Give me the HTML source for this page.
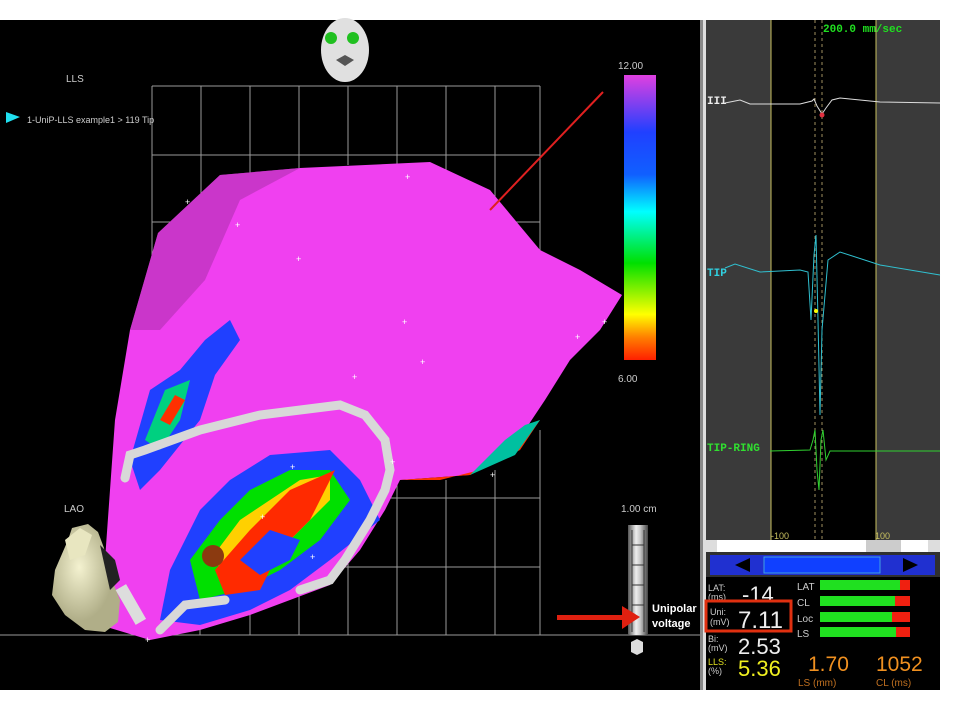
<!DOCTYPE html>
<html><head><meta charset="utf-8"><style>
body{margin:0;width:960px;height:720px;background:#fff;overflow:hidden;font-family:"Liberation Sans",sans-serif}
svg{position:absolute;left:0;top:0}
</style></head><body>
<svg width="960" height="720" viewBox="0 0 960 720">
<defs>
<linearGradient id="cb" x1="0" y1="0" x2="0" y2="1">
<stop offset="0" stop-color="#e040e0"/><stop offset="0.2" stop-color="#2040ff"/><stop offset="0.35" stop-color="#1060ff"/>
<stop offset="0.48" stop-color="#00ffff"/><stop offset="0.66" stop-color="#00e000"/><stop offset="0.84" stop-color="#ffff00"/>
<stop offset="0.92" stop-color="#ff8000"/><stop offset="1" stop-color="#ff2000"/></linearGradient>
<linearGradient id="sb" x1="0" y1="0" x2="1" y2="0"><stop offset="0" stop-color="#555"/><stop offset=".4" stop-color="#eee"/><stop offset=".6" stop-color="#ccc"/><stop offset="1" stop-color="#444"/></linearGradient>
<radialGradient id="ht" cx=".4" cy=".4"><stop offset="0" stop-color="#f4f2d0"/><stop offset="1" stop-color="#b0ae88"/></radialGradient>
</defs>
<rect x="0" y="20" width="700" height="670" fill="#000"/>
<g stroke="#9a9a9a" stroke-width="1" fill="none">
<path d="M152 86H540M152 155H540M152 222H540M152 86V300M201 86V200M250 86V190M299 86V170M348 86V165M397 86V165M446 86V170M495 86V200M540 86V260"/>
<path d="M0 635H700M200 600V635M250 590V635M299 560V635M348 520V635M397 480V635M446 480V635M495 470V635M540 430V635M380 498H540M340 567H540"/>
</g>
<path d="M158 233L220 175L300 168L430 162L490 190L540 250L580 270L622 295L600 330L570 360L545 400L525 430L505 455L470 475L400 480L385 510L360 550L330 585L290 600L250 615L200 630L150 640L100 625L105 560L115 420L130 330Z" fill="#f040f0"/>
<path d="M158 233L220 175L300 168L240 200L205 280L160 330L130 330Z" fill="#b030b0" opacity=".6"/>
<path d="M130 460L150 390L180 370L205 340L230 320L240 340L215 375L200 420L160 470L140 490Z" fill="#2040ff"/>
<path d="M145 440L165 390L190 380L180 420L160 450Z" fill="#00d080"/>
<path d="M160 420L175 395L185 400L170 425Z" fill="#ff3000"/>
<path d="M170 570L200 510L230 480L270 455L330 450L360 480L380 520L330 560L290 590L250 610L200 625L160 620Z" fill="#2040ff"/>
<path d="M190 560L220 520L250 490L290 470L330 470L350 500L320 540L280 570L240 590L200 600Z" fill="#00e000"/>
<path d="M210 560L240 520L270 500L300 480L330 475L330 500L300 530L270 560L240 580Z" fill="#ffd000"/>
<path d="M215 570L250 530L290 490L335 470L310 520L280 550L260 590L225 595Z" fill="#ff2a00"/>
<path d="M240 560L270 530L300 540L290 560L260 575Z" fill="#2040ff"/>
<path d="M400 480L470 475L505 455L525 430L540 420L520 450L480 470L440 480Z" fill="#ff3000"/>
<path d="M470 475L505 440L525 425L540 420L515 455Z" fill="#00c0a0"/>
<g stroke="#d8d8d8" stroke-width="9" fill="none" stroke-linecap="round">
<path d="M125 478L130 455L145 450L200 430L260 415L340 405L365 415L385 440L390 470L385 490L370 520L345 560L330 580L300 590"/>
<path d="M160 630L185 605L225 600"/>
</g>
<circle cx="213" cy="556" r="11" fill="#8b3a10"/>
<g fill="#fff" font-size="9">
<text x="185" y="205">+</text><text x="235" y="228">+</text><text x="296" y="262">+</text><text x="402" y="325">+</text><text x="420" y="365">+</text><text x="352" y="380">+</text><text x="290" y="470">+</text><text x="390" y="465">+</text><text x="260" y="520">+</text><text x="310" y="560">+</text><text x="490" y="478">+</text><text x="575" y="340">+</text><text x="602" y="325">+</text><text x="145" y="643">+</text><text x="405" y="180">+</text>
</g>
<line x1="490" y1="210" x2="603" y2="92" stroke="#e02020" stroke-width="2"/>
<rect x="624" y="75" width="32" height="285" fill="url(#cb)"/>
<text x="618" y="69" fill="#ccc" font-size="10">12.00</text>
<text x="618" y="382" fill="#ccc" font-size="10">6.00</text>
<ellipse cx="345" cy="50" rx="24" ry="32" fill="#e0e0e0"/>
<circle cx="331" cy="38" r="6" fill="#20c020"/><circle cx="353" cy="38" r="6" fill="#20c020"/>
<path d="M336 60L345 55L354 60L345 66Z" fill="#555"/>
<text x="66" y="82" fill="#ccc" font-size="10">LLS</text>
<path d="M6 112L20 117L6 123Z" fill="#20e0f0"/>
<text x="27" y="123" fill="#ccc" font-size="9">1-UniP-LLS example1 &gt; 119 Tip</text>
<text x="64" y="512" fill="#ccc" font-size="10">LAO</text>
<path d="M68 540L72 528L88 524L98 532L104 548L110 575L120 600L118 622L105 632L85 630L65 615L52 595L55 570Z" fill="url(#ht)"/>
<path d="M65 540L80 528L92 535L85 555L70 560Z" fill="#e8e6c0"/>
<path d="M100 545L115 560L120 580L110 590Z" fill="#222"/>
<rect x="125" y="585" width="12" height="40" fill="#ddd" transform="rotate(-30 130 605)"/>
<text x="621" y="512" fill="#ccc" font-size="10">1.00 cm</text>
<rect x="628" y="525" width="20" height="110" fill="url(#sb)"/>
<path d="M632 530V632M644 530V632M632 545H644M632 565H644M632 585H644M632 605H644" stroke="#333" stroke-width="1"/>
<path d="M631 642L637 639L643 642V652L637 655L631 652Z" fill="#ddd"/>
<rect x="557" y="615" width="70" height="5" fill="#e02010"/>
<path d="M622 606L640 617L622 629Z" fill="#e02010"/>
<text x="652" y="612" fill="#fff" font-size="11" font-weight="bold">Unipolar</text>
<text x="652" y="627" fill="#fff" font-size="11" font-weight="bold">voltage</text>
<rect x="700" y="20" width="3" height="670" fill="#888"/>
<rect x="703" y="20" width="3" height="670" fill="#ddd"/>
<rect x="706" y="20" width="234" height="520" fill="#3a3a3a"/>
<rect x="771" y="20" width="105" height="520" fill="#000"/>
<path d="M771 20V540M876 20V540" stroke="#c8c060" stroke-width="1"/>
<path d="M815 20V540M822 20V540" stroke="#a09060" stroke-width="1" stroke-dasharray="3 3"/>
<text x="823" y="32" fill="#20e020" font-family="Liberation Mono,monospace" font-size="11" font-weight="bold">200.0 mm/sec</text>
<text x="707" y="104" fill="#eee" font-family="Liberation Mono,monospace" font-size="11" font-weight="bold">III</text>
<path d="M725 103L740 100L750 104L800 104L812 101L814 99L817 106L822 114L826 108L832 100L840 98L880 102L940 103" stroke="#ddd" fill="none"/>
<circle cx="822" cy="115" r="2.5" fill="#e03040"/>
<text x="707" y="276" fill="#30d0e0" font-family="Liberation Mono,monospace" font-size="11" font-weight="bold">TIP</text>
<path d="M725 268L735 264L760 272L800 270L808 272L811 320L814 255L816 235L818 320L820 415L822 330L828 260L840 252L880 265L940 275" stroke="#30c0d0" fill="none"/>
<circle cx="816" cy="311" r="2" fill="#ff0"/>
<text x="707" y="451" fill="#30e030" font-family="Liberation Mono,monospace" font-size="11" font-weight="bold">TIP-RING</text>
<path d="M770 451L810 450L813 440L815 430L817 470L819 490L821 440L823 430L826 460L830 451L940 451" stroke="#30d030" fill="none"/>
<text x="771" y="539" fill="#c8c060" font-size="9">-100</text><text x="875" y="539" fill="#c8c060" font-size="9">100</text>
<rect x="706" y="540" width="234" height="12" fill="#fff"/>
<rect x="706" y="540" width="11" height="12" fill="#ddd"/><rect x="928" y="540" width="12" height="12" fill="#ddd"/>
<rect x="866" y="540" width="35" height="12" fill="#ccc"/>
<rect x="706" y="552" width="234" height="25" fill="#303030"/>
<rect x="710" y="555" width="225" height="20" fill="#2030d0"/>
<rect x="764" y="557" width="116" height="16" fill="#1040ff" stroke="#40a0e0"/>
<path d="M735 565L750 558V572Z" fill="#000"/><path d="M918 565L903 558V572Z" fill="#000"/>
<rect x="706" y="577" width="234" height="113" fill="#000"/>
<text x="708" y="591" fill="#ccc" font-size="9">LAT:</text><text x="708" y="600" fill="#ccc" font-size="9">(ms)</text>
<text x="742" y="602" fill="#eee" font-size="22">-14</text>
<rect x="706" y="601" width="85" height="30" fill="none" stroke="#e03010" stroke-width="3"/>
<text x="710" y="615" fill="#ccc" font-size="9">Uni:</text><text x="710" y="625" fill="#ccc" font-size="9">(mV)</text>
<text x="738" y="628" fill="#eee" font-size="24">7.11</text>
<text x="708" y="642" fill="#ccc" font-size="9">Bi:</text><text x="708" y="651" fill="#ccc" font-size="9">(mV)</text>
<text x="738" y="654" fill="#eee" font-size="22">2.53</text>
<text x="708" y="665" fill="#e0e020" font-size="9">LLS:</text><text x="708" y="674" fill="#ccc" font-size="9">(%)</text>
<text x="738" y="676" fill="#f0f020" font-size="22">5.36</text>
<g font-size="10" fill="#ccc"><text x="797" y="590">LAT</text><text x="797" y="606">CL</text><text x="797" y="622">Loc</text><text x="797" y="637">LS</text></g>
<rect x="820" y="580" width="80" height="10" fill="#20e020"/><rect x="900" y="580" width="10" height="10" fill="#f02010"/>
<rect x="820" y="596" width="75" height="10" fill="#20e020"/><rect x="895" y="596" width="15" height="10" fill="#f02010"/>
<rect x="820" y="612" width="72" height="10" fill="#20e020"/><rect x="892" y="612" width="18" height="10" fill="#f02010"/>
<rect x="820" y="627" width="76" height="10" fill="#20e020"/><rect x="896" y="627" width="14" height="10" fill="#f02010"/>
<text x="808" y="671" fill="#f09020" font-size="21">1.70</text>
<text x="876" y="671" fill="#f09020" font-size="21">1052</text>
<text x="798" y="686" fill="#c07020" font-size="10">LS (mm)</text>
<text x="876" y="686" fill="#c07020" font-size="10">CL (ms)</text>
</svg>
</body></html>
